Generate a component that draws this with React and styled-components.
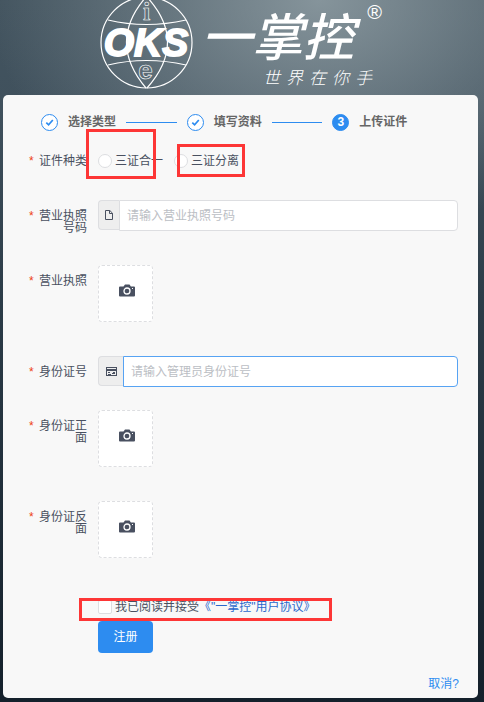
import { useState } from 'react';
import styled, { createGlobalStyle } from 'styled-components';

const GlobalStyle = createGlobalStyle`
  * {
    box-sizing: border-box;
  }

  body {
    margin: 0;
    min-height: 100vh;
    background:
      radial-gradient(ellipse 330px 240px at 320px 0, rgba(150, 164, 170, 0.8), rgba(150, 164, 170, 0)),
      linear-gradient(180deg, #43545f 0, #40515d 110px, #2c3c48 300px, #14202b 100%);
    color: #495060;
    font-family: "Liberation Sans", "Noto Sans CJK SC", sans-serif;
    font-size: 12px;
    line-height: 12px;
  }

  button,
  input {
    font: inherit;
  }
`;

const Page = styled.div`
  padding: 0 6px 4px 3px;
`;

const Header = styled.header`
  display: flex;
  justify-content: center;
  gap: 8px;
  height: 95px;
  color: #fff;
`;

const Brand = styled.div`
  display: flex;
  flex-direction: column;
  align-items: flex-end;
`;

const BrandName = styled.h1`
  display: flex;
  align-items: flex-start;
  gap: 13px;
  margin: 0;
  font-family: "Noto Sans CJK SC", sans-serif;
  font-size: 51px;
  font-style: italic;
  font-weight: 500;
  line-height: 69px;
`;

const Registered = styled.span`
  font-family: "Liberation Sans", sans-serif;
  font-size: 20px;
  font-style: normal;
  font-weight: 400;
  line-height: 24px;
`;

const Slogan = styled.p`
  display: flex;
  gap: 6px;
  margin: 0;
  padding-right: 10px;
  font-family: "Noto Sans CJK SC", sans-serif;
  font-size: 17px;
  font-style: italic;
  font-weight: 300;
  line-height: 16px;
`;

const Card = styled.main`
  padding: 18px 0 8px;
  border-radius: 5px;
  background: #f8f8f8;
`;

const Steps = styled.ol`
  display: grid;
  grid-template-columns: repeat(3, 1fr);
  margin: 0;
  padding: 0 0 0 38px;
  list-style: none;
`;

const Step = styled.li`
  display: flex;
  align-items: center;
  gap: 10px;
  height: 18px;
  color: #666;
  font-weight: bold;
  white-space: nowrap;
`;

const StepIcon = styled.span`
  display: flex;
  flex: none;
  align-items: center;
  justify-content: center;
  width: 17px;
  height: 17px;
  border: 1px solid #2d8cf0;
  border-radius: 50%;
  background: ${({ $current }) => ($current ? '#2d8cf0' : '#fff')};
  color: #fff;
`;

const StepLine = styled.span`
  flex: 1;
  height: 1px;
  margin-right: 10px;
  background: #2d8cf0;
`;

const Form = styled.form`
  padding: 14px 20px 0 24px;
`;

const Row = styled.div`
  display: flex;
  align-items: flex-start;
  gap: 11px;
  margin-bottom: ${({ $gap }) => $gap || 34}px;
`;

const Label = styled.label`
  display: flex;
  flex: none;
  justify-content: flex-end;
  gap: 4px;
  width: 60px;
  padding-top: 10px;
  text-align: right;

  &::before {
    content: '*';
    color: #ed3f14;
    font-family: "Liberation Mono", monospace;
    line-height: 14px;
  }
`;

const LabelText = styled.span`
  flex: none;
  width: 48px;
`;

const Options = styled.div`
  display: flex;
  align-items: center;
  gap: 11px;
  height: 32px;
`;

const Option = styled.label`
  position: relative;
  display: flex;
  align-items: center;
  gap: 3px;
  height: 14px;
  white-space: nowrap;
`;

const Tick = styled.input`
  appearance: none;
  flex: none;
  width: 14px;
  height: 14px;
  margin: 0;
  border: 1px solid #dddee1;
  border-radius: ${({ type }) => (type === 'radio' ? '50%' : '2px')};
  background: #fff;

  &:checked {
    border-color: #2d8cf0;
    background: #2d8cf0;
  }
`;

const Mark = styled.span`
  position: absolute;
  top: ${({ $top }) => $top}px;
  left: ${({ $left }) => $left}px;
  width: ${({ $width }) => $width}px;
  height: ${({ $height }) => $height}px;
  border: 3px solid #fd3636;
  pointer-events: none;
`;

const Field = styled.div`
  display: flex;
  flex: 1;
  height: 31px;
`;

const Addon = styled.span`
  display: flex;
  align-items: center;
  justify-content: center;
  width: ${({ $wide }) => ($wide ? 25 : 21)}px;
  height: 30px;
  border: 1px solid #dddee1;
  border-right: 0;
  border-radius: 4px 0 0 4px;
  background: #eee;
`;

const TextInput = styled.input`
  flex: 1;
  min-width: 0;
  padding: 0 7px;
  border: 1px solid ${({ $active }) => ($active ? '#57a3f3' : '#dddee1')};
  border-radius: 0 4px 4px 0;
  outline: none;
  background: #fff;
  color: #495060;

  &::placeholder {
    color: #bbbec4;
  }
`;

const Upload = styled.button`
  display: flex;
  align-items: center;
  justify-content: center;
  width: 55px;
  height: 57px;
  padding: 0 0 6px 3px;
  border: 1px dashed #dddee1;
  border-radius: 4px;
  background: #fff;
  color: #495060;
  cursor: pointer;
`;

const Actions = styled.div`
  display: flex;
  flex-direction: column;
  align-items: flex-start;
  gap: 7px;
  margin-top: 42px;
  padding-left: 71px;
`;

const Agreement = styled.a`
  color: #2b68cc;
  text-decoration: none;
`;

const Submit = styled.button`
  width: 55px;
  height: 32px;
  padding: 0;
  border: 0;
  border-radius: 4px;
  background: #2d8cf0;
  color: #fff;
  cursor: pointer;
`;

const Footer = styled.div`
  display: flex;
  justify-content: flex-end;
  padding: 25px 19px 0;
`;

const Cancel = styled.a`
  color: #2d8cf0;
  text-decoration: none;
`;

function Globe() {
  return (
    <svg width="94" height="95" viewBox="98 0 94 95" fill="none" stroke="#fff" strokeWidth="1.2" role="img" aria-label="OKS">
      <circle cx="145.5" cy="42.5" r="45.5" />
      <path d="M145-3Q106 42 145 88M146-3Q187 42 146 88" />
      <path d="M107 20Q145 29 185 20M107 65Q145 56 185 65" />
      <text x="145.500" y="20" textAnchor="middle" fontFamily="Liberation Serif" fontWeight="bold" fontSize="26" strokeWidth="0.6">i</text>
      <text x="144.500" y="79" textAnchor="middle" fontFamily="Liberation Sans" fontWeight="bold" fontSize="26" strokeWidth="0.6">e</text>
      <text x="145" y="56" textAnchor="middle" fontFamily="Liberation Sans" fontWeight="bold" fontStyle="italic" fontSize="39" fill="#fff" strokeWidth="1.8">OKS</text>
    </svg>
  );
}

function CheckIcon() {
  return (
    <svg width="9" height="9" viewBox="0 0 9 9" fill="none" stroke="#2d8cf0" strokeWidth="1.7">
      <path d="M1.300 4.600 3.600 6.800 7.800 2" />
    </svg>
  );
}

function DocumentIcon() {
  return (
    <svg width="8" height="10" viewBox="0 0 8 10" fill="none" stroke="#495060">
      <path d="M.5.5h4.300L7.500 3.200v6.300H.5z" />
      <path d="M4.500.5v3h3" />
    </svg>
  );
}

function CardIcon() {
  return (
    <svg width="11" height="9" viewBox="0 0 11 9" fill="#495060">
      <path fillRule="evenodd" d="M0 0h11v9H0zM1 1v1h9V1zM1 4v4h9V4z" />
      <path d="M2 5h2v1H2zM6 6h1V5h2v2H6zM2 7h3v1H2z" />
    </svg>
  );
}

function CameraIcon() {
  return (
    <svg width="16" height="13" viewBox="0 0 16 13" fill="currentColor">
      <path d="M1 2.500h3.500L6 .5h4.500l1.400 2H15q1 0 1 1v8q0 1-1 1H1q-1 0-1-1v-8q0-1 1-1z" />
      <circle cx="8" cy="7" r="3" fill="none" stroke="#fff" strokeWidth="1.3" />
      <path d="M13 4h1v1h-1z" fill="#fff" />
    </svg>
  );
}

function UploadRow({ id, label }) {
  return (
    <Row>
      <Label htmlFor={id}><LabelText>{label}</LabelText></Label>
      <Upload id={id} type="button"><CameraIcon /></Upload>
    </Row>
  );
}

function App() {
  const [type, setType] = useState('');

  return (
    <>
      <GlobalStyle />
      <Page>
        <Header>
          <Globe />
          <Brand>
            <BrandName>一掌控<Registered>®</Registered></BrandName>
            <Slogan>
              {['世', '界', '在', '你', '手'].map(char => <span key={char}>{char}</span>)}
            </Slogan>
          </Brand>
        </Header>

        <Card>
          <Steps>
            <Step><StepIcon><CheckIcon /></StepIcon>选择类型<StepLine /></Step>
            <Step><StepIcon><CheckIcon /></StepIcon>填写资料<StepLine /></Step>
            <Step><StepIcon $current>3</StepIcon>上传证件</Step>
          </Steps>

          <Form onSubmit={event => event.preventDefault()}>
            <Row $gap={23}>
              <Label as="div" id="kind"><LabelText>证件种类</LabelText></Label>
              <Options role="radiogroup" aria-labelledby="kind">
                <Option>
                  <Tick type="radio" name="kind" checked={type === 'one'} onChange={() => setType('one')} />
                  三证合一
                  <Mark $top={-25} $left={-12} $width={70} $height={50} />
                </Option>
                <Option>
                  <Tick type="radio" name="kind" checked={type === 'split'} onChange={() => setType('split')} />
                  三证分离
                  <Mark $top={-10} $left={3} $width={68} $height={33} />
                </Option>
              </Options>
            </Row>

            <Row $gap={31}>
              <Label htmlFor="license"><LabelText>营业执照号码</LabelText></Label>
              <Field>
                <Addon><DocumentIcon /></Addon>
                <TextInput id="license" placeholder="请输入营业执照号码" />
              </Field>
            </Row>

            <UploadRow id="licensePhoto" label="营业执照" />

            <Row $gap={23}>
              <Label htmlFor="idNumber"><LabelText>身份证号</LabelText></Label>
              <Field>
                <Addon $wide><CardIcon /></Addon>
                <TextInput id="idNumber" placeholder="请输入管理员身份证号" $active />
              </Field>
            </Row>

            <UploadRow id="idFront" label="身份证正面" />
            <UploadRow id="idBack" label="身份证反面" />

            <Actions>
              <Option>
                <Tick type="checkbox" />
                <span>我已阅读并接受<Agreement href="#agreement">《"一掌控"用户协议》</Agreement></span>
                <Mark $top={-2} $left={-19} $width={253} $height={23} />
              </Option>
              <Submit type="submit">注册</Submit>
            </Actions>
          </Form>

          <Footer>
            <Cancel href="#cancel">取消?</Cancel>
          </Footer>
        </Card>
      </Page>
    </>
  );
}

export default App;
